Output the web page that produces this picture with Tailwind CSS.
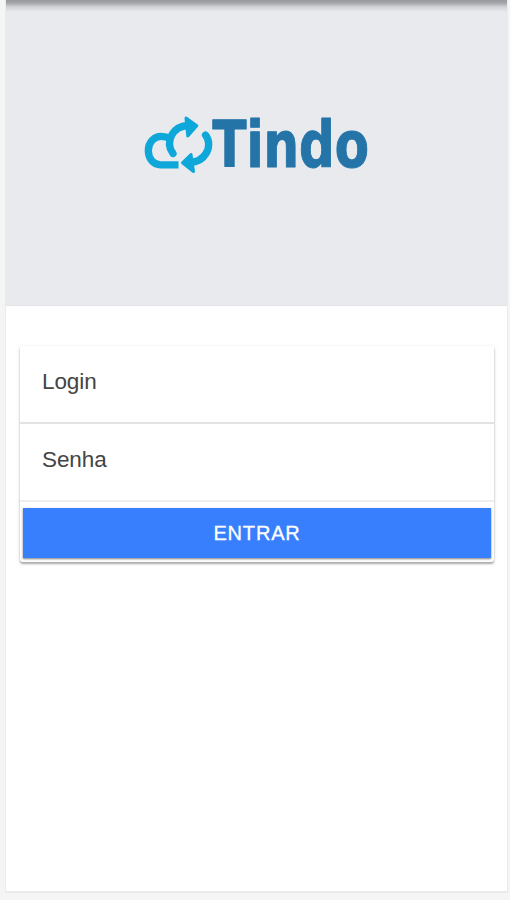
<!DOCTYPE html>
<html lang="pt-BR">
<head>
<meta charset="utf-8">
<title>Tindo</title>
<script src="https://cdn.jsdelivr.net/npm/@tailwindcss/browser@4"></script>
</head>
<body class="h-[900px] overflow-hidden bg-[#f5f5f5] pl-[5px] pr-[2px] font-['Liberation_Sans',Arial,sans-serif]">
<main class="flex h-[893px] flex-col border-x border-b-2 border-[#ebebec] bg-white">
  <header class="flex h-[306px] shrink-0 justify-center border-b border-[#e3e4e7] bg-[linear-gradient(to_bottom,#98999c_0px,#a5a6a9_3px,#d2d3d6_7px,#e8eaed_12px)] pt-[95px]">
    <svg class="h-[100px] w-[240px] overflow-visible" viewBox="136.500 95 240 100" role="img" aria-label="Tindo">
      <g fill="none" stroke="#0da7da" stroke-width="7.300" stroke-linejoin="round">
        <path d="M178 164.800H160C152.500 164.800 147.800 158 147.800 150.500C147.800 142 154 136.300 160.500 136.300C164 136.300 167 137 169.500 138.500"/>
        <path stroke-linecap="round" d="M172.500 153.500C168.300 148 168 141 171.500 134.500C175 128.800 180 126 187 125.500"/>
        <path stroke-linecap="round" d="M205 135C209 140 209.300 147.500 205.500 153.500C202.500 158.500 197.500 161.800 190 162.500"/>
      </g>
      <g fill="#0da7da" stroke="#0da7da" stroke-width="3" stroke-linejoin="round">
        <path d="M185.500 118L196.300 125.800L187.300 136Z"/>
        <path d="M190.500 154.500L182 162.800L193 171.500Z"/>
      </g>
      <text x="212" y="167" textLength="156.500" lengthAdjust="spacingAndGlyphs" fill="#2474a8" stroke="#2474a8" stroke-width="1" stroke-linejoin="round" font-family="DejaVu Sans Condensed, DejaVu Sans, sans-serif" font-weight="700" font-size="64">Tindo</text>
    </svg>
  </header>
  <form class="ml-[14px] mr-[13px] mt-[40px] flex h-[216px] flex-col rounded-[3px] bg-white text-[22.500px] text-[#444] shadow-[0_2px_2px_rgba(0,0,0,0.28),0_1px_4px_rgba(0,0,0,0.12)]">
    <label class="flex h-[78px] items-center border-b-2 border-[#e2e2e2] pl-[22px] pb-[5px] tracking-[-0.1px]">Login</label>
    <label class="flex h-[78px] items-center border-b-2 border-[#eeeeee] pl-[22px] pb-[5px] tracking-[-0.1px]">Senha</label>
    <button type="button" class="mx-[3px] mt-[6px] h-[50px] bg-[#387ffe] text-[20px] tracking-[0.8px] text-white shadow-[0_1px_2px_rgba(0,0,0,0.5)] [-webkit-text-stroke:0.3px_white]">ENTRAR</button>
  </form>
</main>
</body>
</html>
